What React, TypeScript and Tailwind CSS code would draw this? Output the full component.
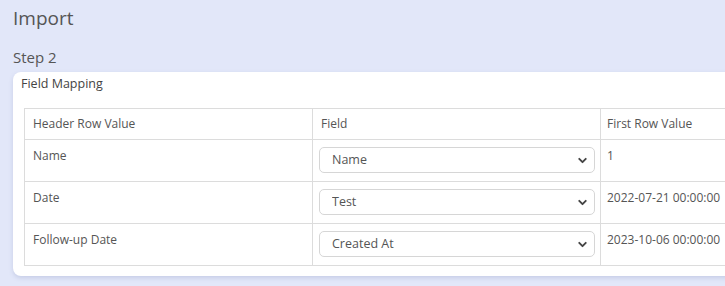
import { ChevronDown } from "lucide-react";

const rows = [
  { header: "Name", field: "Name", first: "1" },
  { header: "Date", field: "Test", first: "2022-07-21 00:00:00" },
  { header: "Follow-up Date", field: "Created At", first: "2023-10-06 00:00:00" },
];

const fieldOptions = ["Name", "Test", "Created At", "Updated At"];

function App() {
  return (
    <div className="h-[286px] w-[725px] overflow-hidden bg-[#e2e7f9] pl-[13px] font-['Open_Sans',sans-serif] text-[#555]">
      <h1 className="pt-[5px] text-[19px] leading-[26px]">Import</h1>
      <h2 className="mt-[16px] text-[15px] leading-[20px]">Step 2</h2>

      <div className="mt-[5px] w-[890px] rounded-[8px] bg-white pt-[3px] pb-[10px] pl-[8px] shadow-[0_2px_4px_rgba(120,130,180,0.25)]">
        <div className="text-[12.5px] leading-[18px] text-[#444]">Field Mapping</div>

        <table className="mt-[15px] ml-[3px] w-[864px] table-fixed border-collapse text-[12px] text-[#555]">
          <thead>
            <tr className="h-[31px]">
              <th className="w-[288px] border border-[#dcdcdc] px-[8px] text-left font-normal">Header Row Value</th>
              <th className="w-[288px] border border-[#dcdcdc] px-[8px] text-left font-normal">Field</th>
              <th className="w-[288px] border border-[#dcdcdc] px-[6px] text-left font-normal">First Row Value</th>
            </tr>
          </thead>
          <tbody>
            {rows.map((row) => (
              <tr key={row.header} className="h-[42px]">
                <td className="border border-[#dcdcdc] px-[8px] pt-[7px] align-top leading-[18px]">{row.header}</td>
                <td className="border border-[#dcdcdc] pt-[7px] pr-[5px] pb-[6px] pl-[6px] align-top">
                  <div className="relative">
                    <select
                      defaultValue={row.field}
                      className="h-[26px] w-full appearance-none rounded-[5px] border border-[#d6d6d6] bg-white pl-[12px] text-[12.5px] text-[#555] outline-none"
                    >
                      {fieldOptions.map((o) => (
                        <option key={o} value={o}>
                          {o}
                        </option>
                      ))}
                    </select>
                    <ChevronDown
                      size={13}
                      strokeWidth={3.5}
                      className="pointer-events-none absolute top-[7px] right-[6px] text-[#444]"
                    />
                  </div>
                </td>
                <td className="border border-[#dcdcdc] px-[6px] pt-[7px] align-top leading-[18px]">{row.first}</td>
              </tr>
            ))}
          </tbody>
        </table>
      </div>
    </div>
  );
}

export default App;
